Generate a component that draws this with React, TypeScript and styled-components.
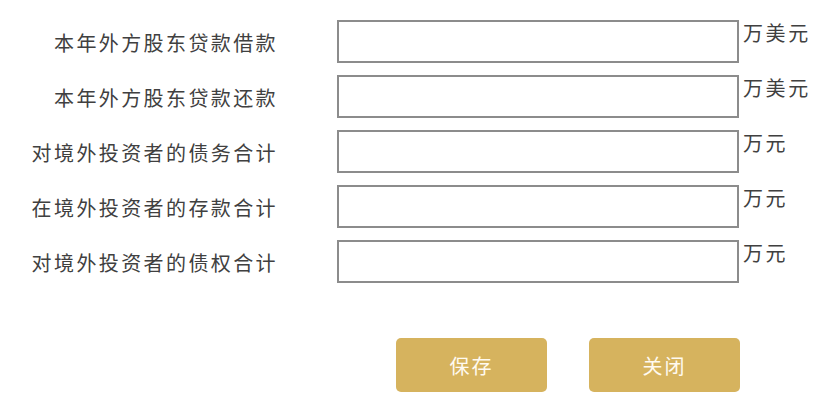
import React from "react";
import styled, { createGlobalStyle } from "styled-components";

const GlobalStyle = createGlobalStyle`
  html, body {
    margin: 0;
    padding: 0;
    background: #ffffff;
  }
  body {
    font-family: "Noto Sans CJK SC", "Noto Sans", sans-serif;
  }
`;

const rows = [
  { label: "本年外方股东贷款借款", unit: "万美元" },
  { label: "本年外方股东贷款还款", unit: "万美元" },
  { label: "对境外投资者的债务合计", unit: "万元" },
  { label: "在境外投资者的存款合计", unit: "万元" },
  { label: "对境外投资者的债权合计", unit: "万元" },
];

const Page = styled.div`
  width: 830px;
  height: 413px;
  padding-top: 20px;
  box-sizing: border-box;
`;

const Form = styled.div`
  display: grid;
  grid-template-columns: 276px 402px auto;
  row-gap: 12px;
`;

const Label = styled.div`
  height: 43px;
  display: flex;
  align-items: center;
  justify-content: flex-end;
  padding-top: 2px;
  box-sizing: border-box;
  font-size: 20px;
  letter-spacing: 2.4px;
  margin-right: -2px;
  color: #404040;
  white-space: nowrap;
`;

const Field = styled.input`
  margin-left: 61px;
  width: 402px;
  height: 43px;
  box-sizing: border-box;
  border: 2px solid #8c8c8c;
  border-radius: 0;
  background: #fff;
  outline: none;
`;

const Unit = styled.div`
  margin-left: 65px;
  margin-top: -2px;
  font-size: 20px;
  letter-spacing: 2.6px;
  color: #404040;
  white-space: nowrap;
`;

const Actions = styled.div`
  display: flex;
  gap: 42px;
  margin-top: 55px;
  padding-left: 396px;
`;

const Button = styled.button`
  width: 151px;
  height: 54px;
  border: none;
  border-radius: 5px;
  background: #d6b35e;
  color: #fffaf0;
  font-family: "Noto Sans CJK SC", sans-serif;
  font-size: 20px;
  letter-spacing: 2px;
  cursor: pointer;
`;

export default function App() {
  return (
    <Page>
      <GlobalStyle />
      <Form>
        {rows.map((r) => (
          <React.Fragment key={r.label}>
            <Label>{r.label}</Label>
            <Field type="text" />
            <Unit>{r.unit}</Unit>
          </React.Fragment>
        ))}
      </Form>
      <Actions>
        <Button>保存</Button>
        <Button>关闭</Button>
      </Actions>
    </Page>
  );
}
